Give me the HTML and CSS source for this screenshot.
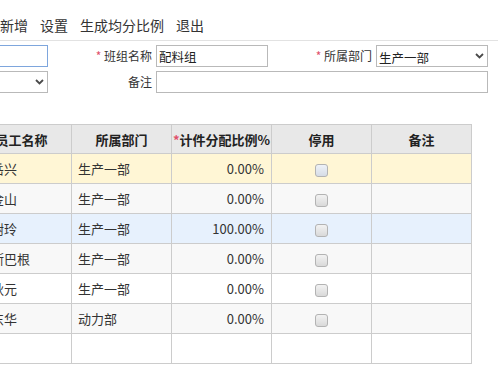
FILE: index.html
```html
<!DOCTYPE html>
<html lang="zh-CN">
<head>
    <meta charset="UTF-8">
    <title>班组设置</title>
    <link rel="stylesheet" href="styles.css">
</head>
<body>
    <div class="toolbar">
        <a class="tool">新增</a>
        <a class="tool">设置</a>
        <a class="tool">生成均分比例</a>
        <a class="tool">退出</a>
    </div>

    <div class="form-grid">
        <input type="text" class="field focused" value="">
        <label class="field-label"><span class="req">*</span> 班组名称</label>
        <input type="text" class="field" value="配料组">
        <label class="field-label"><span class="req">*</span> 所属部门</label>
        <div class="select-wrap">
            <select class="field">
                <option>生产一部</option>
                <option>动力部</option>
            </select>
            <svg class="chevron" width="9" height="6" viewBox="0 0 9 6"><path d="M1 1 L4.5 4.5 L8 1" fill="none" stroke="#4a4a4a" stroke-width="1.8"/></svg>
        </div>

        <div class="select-wrap">
            <select class="field">
                <option></option>
            </select>
            <svg class="chevron" width="9" height="6" viewBox="0 0 9 6"><path d="M1 1 L4.5 4.5 L8 1" fill="none" stroke="#4a4a4a" stroke-width="1.8"/></svg>
        </div>
        <label class="field-label">备注</label>
        <input type="text" class="field wide" value="">
    </div>

    <table class="grid">
        <colgroup>
            <col><col><col><col><col>
        </colgroup>
        <thead>
            <tr>
                <th>员工名称</th>
                <th>所属部门</th>
                <th><span class="req">*</span>计件分配比例%</th>
                <th>停用</th>
                <th>备注</th>
            </tr>
        </thead>
        <tbody>
            <tr class="selected">
                <td>王岳兴</td><td>生产一部</td><td class="num">0.00%</td><td class="center"><span class="check"></span></td><td></td>
            </tr>
            <tr class="stripe">
                <td>王金山</td><td>生产一部</td><td class="num">0.00%</td><td class="center"><span class="check"></span></td><td></td>
            </tr>
            <tr class="hover">
                <td>李树玲</td><td>生产一部</td><td class="num">100.00%</td><td class="center"><span class="check"></span></td><td></td>
            </tr>
            <tr class="stripe">
                <td>乌斯巴根</td><td>生产一部</td><td class="num">0.00%</td><td class="center"><span class="check"></span></td><td></td>
            </tr>
            <tr>
                <td>张秋元</td><td>生产一部</td><td class="num">0.00%</td><td class="center"><span class="check"></span></td><td></td>
            </tr>
            <tr class="stripe">
                <td>陈东华</td><td>动力部</td><td class="num">0.00%</td><td class="center"><span class="check"></span></td><td></td>
            </tr>
            <tr>
                <td></td><td></td><td></td><td></td><td></td>
            </tr>
        </tbody>
    </table>
</body>
</html>
```

FILE: styles.css
```css
body {
    margin: 0;
    overflow: hidden;
    background-color: #fff;
    color: #333;
    font-family: "Noto Sans CJK SC", "Microsoft YaHei", sans-serif;
    font-size: 13px;
}

.req {
    color: #e0506a;
}

/* toolbar */
.toolbar {
    display: flex;
    gap: 12px;
    height: 30px;
    padding-top: 10px;
    line-height: 30px;
    border-bottom: 1px solid #e2e2e2;
    font-size: 14px;
}

.tool {
    color: #333;
    cursor: pointer;
}

/* form */
.form-grid {
    display: grid;
    grid-template-columns: 112px 108px 112px 108px 112px;
    grid-auto-rows: 22px;
    row-gap: 4px;
    margin-top: 4px;
    margin-left: -64px;
}

.field-label {
    font-size: 12px;
    line-height: 22px;
    text-align: right;
    padding-right: 4px;
    color: #333;
}

.field {
    box-sizing: border-box;
    width: 100%;
    height: 22px;
    margin: 0;
    padding: 0 2px;
    border: 1px solid #b9b9b9;
    border-radius: 0;
    background-color: #fff;
    font-family: inherit;
    font-size: 12.5px;
    color: #222;
    outline: none;
}

.field.focused {
    border-color: #7ea6dd;
}

.field.wide {
    grid-column: span 3;
}

.select-wrap {
    position: relative;
}

.select-wrap select {
    appearance: none;
    -webkit-appearance: none;
    padding-top: 2px;
}

.chevron {
    position: absolute;
    right: 4px;
    top: 8px;
    pointer-events: none;
}

/* data grid */
.grid {
    border-collapse: collapse;
    table-layout: fixed;
    width: 501px;
    margin-top: 31px;
    margin-left: -29px;
}

.grid col {
    width: 100px;
}

.grid th,
.grid td {
    border: 1px solid #cccccc;
    padding: 0 6px;
    overflow: hidden;
    white-space: nowrap;
}

.grid th {
    height: 28px;
    background-color: #e8e8e8;
    color: #222;
    font-weight: bold;
    text-align: center;
}

.grid th:nth-child(3) {
    padding: 0;
}

.grid td {
    height: 29px;
    text-align: left;
}

.grid td.num {
    text-align: right;
    padding-right: 7px;
}

.grid td.center {
    text-align: center;
}

.grid tr.stripe td {
    background-color: #f8f8f8;
}

.grid tr.selected td {
    background-color: #fff6d5;
}

.grid tr.hover td {
    background-color: #e7f1fd;
}

.check {
    display: inline-block;
    width: 11px;
    height: 11px;
    border: 1px solid #b3b3b3;
    border-radius: 3px;
    background: linear-gradient(#f2f2f2, #d9d9d9);
    vertical-align: middle;
}

.selected .check {
    background: linear-gradient(#eef2f8, #d6dce6);
}
```
